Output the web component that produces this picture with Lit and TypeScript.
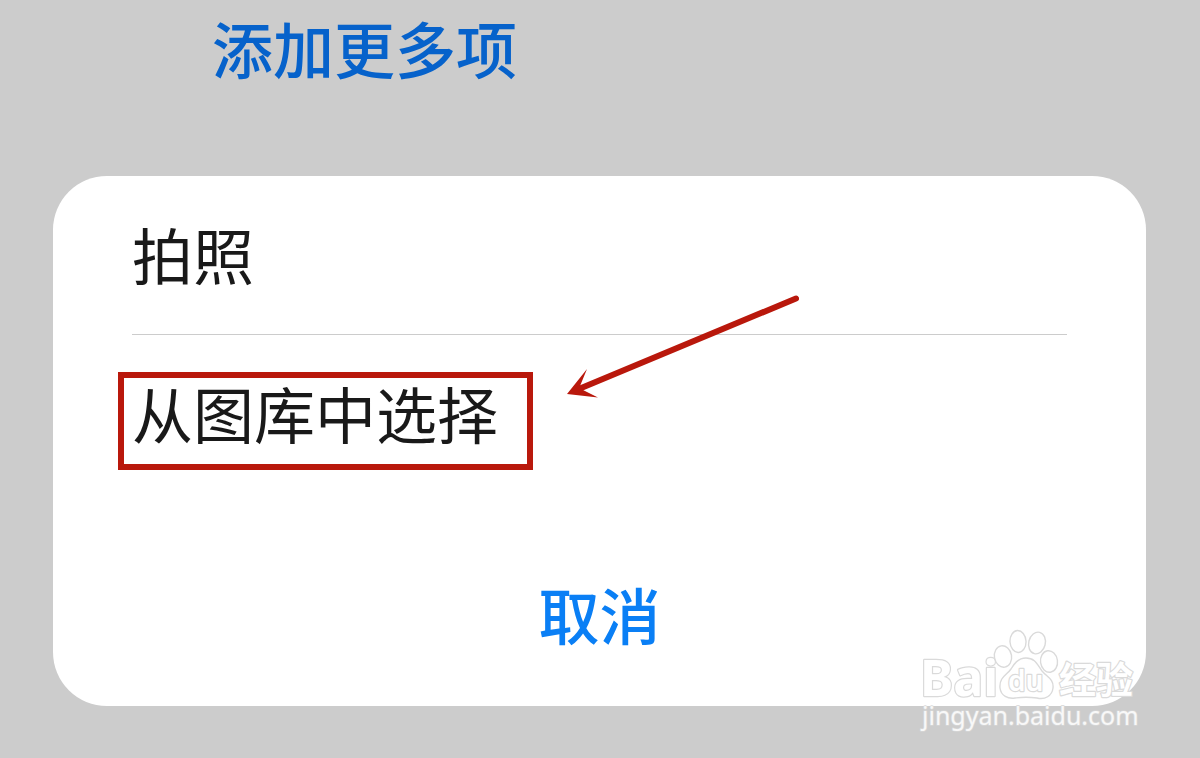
import { LitElement, html, css } from "lit";
import { customElement } from "lit/decorators.js";

@customElement("baidu-watermark")
export class BaiduWatermark extends LitElement {
  static styles = css`
    :host {
      display: block;
      pointer-events: none;
    }
    .mark {
      display: block;
      overflow: visible;
    }
    .shape {
      fill: #ffffff;
      stroke: #dadada;
      stroke-width: 1.4;
    }
    .letters {
      fill: #ffffff;
      stroke: #dadada;
      stroke-width: 2.4;
      paint-order: stroke;
      stroke-linejoin: round;
      font-family: "Noto Sans", "Noto Sans CJK SC", sans-serif;
    }
    .brand {
      font-size: 50px;
      font-weight: 700;
    }
    .du {
      font-size: 28px;
      font-weight: 600;
    }
    .cjk {
      font-family: "Noto Sans CJK SC", sans-serif;
      font-size: 37px;
      font-weight: 700;
    }
    .site {
      font-size: 25px;
      fill: #f8f8f8;
      stroke: #d6d6d6;
      stroke-width: 1.6;
    }
  `;

  render() {
    return html`
      <svg class="mark" width="220" height="110" viewBox="0 0 220 110" role="img" aria-label="Baidu">
        <text class="letters brand" x="0" y="66">Bai</text>
        <ellipse class="shape" cx="83" cy="26.500" rx="8.600" ry="10.800" transform="rotate(-10 83 26.5)" />
        <ellipse class="shape" cx="98" cy="11.500" rx="8" ry="11" transform="rotate(-3 98 11.5)" />
        <ellipse class="shape" cx="117" cy="13" rx="8.300" ry="11" transform="rotate(14 117 13)" />
        <ellipse class="shape" cx="129" cy="31.500" rx="8.500" ry="10.800" transform="rotate(-8 129 31.5)" />
        <path
          class="shape"
          d="M106 28C98 28 94 34 91 39C87 45 79 47 80 58C81 66 88 69 95 68C102 67 110 67 117 68C125 70 132 66 133 58C134 49 127 47 122 41C117 34 115 28 106 28Z"
        />
        <text class="letters du" x="88" y="61">du</text>
        <text class="letters cjk" x="139" y="64">经验</text>
        <text class="letters site" x="2" y="95">jingyan.baidu.com</text>
      </svg>
    `;
  }
}

@customElement("app-root")
export class AppRoot extends LitElement {
  static styles = css`
    :host {
      display: block;
      position: relative;
      min-height: 100vh;
      box-sizing: border-box;
      overflow: hidden;
      background: #cccccc;
      color: #191919;
      font-family: "Noto Sans CJK SC", sans-serif;
      font-size: 61px;
      line-height: 88px;
    }
    button {
      display: block;
      margin: 0;
      padding: 0;
      border: 0;
      background: none;
      color: inherit;
      font: inherit;
      text-align: left;
      cursor: pointer;
    }
    .page {
      display: flex;
      flex-direction: column;
      gap: 84px;
      padding: 4px 54px 52px 53px;
    }
    .more {
      align-self: flex-start;
      margin-left: 159px;
      color: #0662cb;
      font-weight: 500;
    }
    .sheet {
      position: relative;
      display: flex;
      flex-direction: column;
      padding: 0 79px 48px;
      border-radius: 54px;
      background: #ffffff;
    }
    .option {
      padding: 34px 0;
    }
    .first {
      padding-bottom: 36px;
      border-bottom: 1px solid #cccccc;
    }
    .marked {
      position: relative;
      display: inline-block;
    }
    .marked::after {
      content: "";
      position: absolute;
      inset: 3px -35px -13px -14px;
      border: 6px solid #b9180c;
    }
    .cancel {
      margin-top: 79px;
      color: #0a7ff5;
      font-weight: 500;
      text-align: center;
    }
    .arrow {
      position: absolute;
      left: 514px;
      top: 118px;
      pointer-events: none;
    }
    .watermark {
      position: absolute;
      right: 60px;
      bottom: 18px;
    }
  `;

  render() {
    return html`
      <main class="page">
        <button class="more" type="button">添加更多项</button>
        <section class="sheet" role="dialog" aria-label="添加更多项">
          <button class="option first" type="button">拍照</button>
          <button class="option" type="button"><span class="marked">从图库中选择</span></button>
          <button class="cancel" type="button">取消</button>
          <svg class="arrow" width="232" height="106" viewBox="0 0 232 106" aria-hidden="true">
            <path d="M13 94.500L229 4.500" fill="none" stroke="#b9180c" stroke-width="6" stroke-linecap="round" />
            <path d="M0 100L20 75L13 92L16 96L31 103.500Z" fill="#b9180c" />
          </svg>
        </section>
      </main>
      <baidu-watermark class="watermark"></baidu-watermark>
    `;
  }
}
